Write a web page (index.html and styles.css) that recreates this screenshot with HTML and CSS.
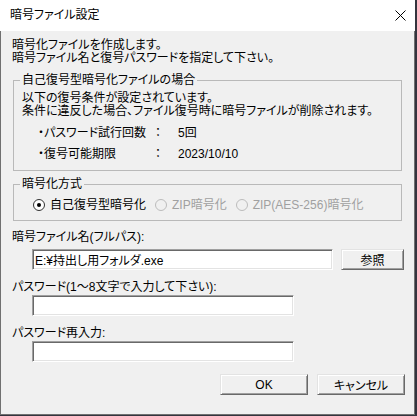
FILE: index.html
```html
<!DOCTYPE html>
<html lang="ja">
<head>
    <meta charset="UTF-8">
    <title>暗号ファイル設定</title>
    <link rel="stylesheet" href="styles.css">
</head>
<body>
    <div class="window">
        <div class="titlebar">
            <span class="title">暗号ファイル設定</span>
            <svg class="close" width="11" height="11" viewBox="0 0 11 11">
                <path d="M0.5 0.5 L10.5 10.5 M10.5 0.5 L0.5 10.5" stroke="#000" stroke-width="1"/>
            </svg>
        </div>
        <div class="client">
            <div class="intro">
                <p>暗号化ファイルを作成します。</p>
                <p>暗号ファイル名と復号パスワードを指定して下さい。</p>
            </div>

            <fieldset class="group cond-group">
                <legend>自己復号型暗号化ファイルの場合</legend>
                <div class="note">
                    <p>以下の復号条件が設定されています。</p>
                    <p>条件に違反した場合、ファイル復号時に暗号ファイルが削除されます。</p>
                </div>
                <div class="conds">
                    <span>・パスワード試行回数</span><span>：</span><span>5回</span>
                    <span>・復号可能期限</span><span>：</span><span>2023/10/10</span>
                </div>
            </fieldset>

            <fieldset class="group method-group">
                <legend>暗号化方式</legend>
                <div class="radios">
                    <label class="radio checked"><span class="dot"></span>自己復号型暗号化</label>
                    <label class="radio disabled"><span class="dot"></span>ZIP暗号化</label>
                    <label class="radio disabled"><span class="dot"></span>ZIP(AES-256)暗号化</label>
                </div>
            </fieldset>

            <div class="label label-file">暗号ファイル名(フルパス):</div>
            <div class="row">
                <input class="text path" type="text" value="E:¥持出し用フォルダ.exe">
                <button class="btn browse">参照</button>
            </div>

            <div class="label label-pw">パスワード(1～8文字で入力して下さい):</div>
            <div class="row">
                <input class="text pw" type="password">
            </div>

            <div class="label label-pw2">パスワード再入力:</div>
            <div class="row">
                <input class="text pw" type="password">
            </div>

            <div class="actions">
                <button class="btn">OK</button>
                <button class="btn">キャンセル</button>
            </div>
        </div>
    </div>
</body>
</html>
```

FILE: styles.css
```css
body {
    margin: 0;
    background: #34343e;
    font-family: "Liberation Sans", "Noto Sans CJK JP", sans-serif;
    font-size: 12px;
    font-feature-settings: "palt";
    color: #000;
}
.window {
    width: 415px;
    height: 415px;
    display: flex;
    flex-direction: column;
    background: #f0f0f0;
}
.titlebar {
    height: 31px;
    flex: none;
    background: #fff;
    display: flex;
    align-items: center;
    justify-content: space-between;
    padding: 0 9px 0 10px;
}
.title {
    line-height: 13px;
}
.client {
    flex: 1;
    border: 1px solid #707070;
    border-top: none;
    padding: 8px 0 0 11px;
}
p {
    margin: 0;
}
.intro, .note {
    line-height: 13px;
}
.group {
    margin: 9px 0 0 1px;
    width: 389px;
    box-sizing: border-box;
    border: 1px solid #b9b9b9;
    padding: 6px 0 10px 8px;
    min-width: 0;
}
.group legend {
    padding: 0 2px;
    margin-left: -2px;
    line-height: 12px;
}
.conds {
    display: grid;
    grid-template-columns: 117px 23px auto;
    row-gap: 9px;
    margin: 9px 0 0 16px;
    line-height: 12px;
}
.method-group {
    margin-top: 7px;
    padding: 8px 0 8px 8px;
}
.radios {
    display: flex;
    padding-left: 11px;
    line-height: 14px;
}
.radio {
    display: flex;
    align-items: center;
    margin-right: 9px;
}
.radio .dot {
    width: 10px;
    height: 10px;
    border: 1px solid #333;
    border-radius: 50%;
    background: #fff;
    margin-right: 5px;
    position: relative;
}
.radio.checked .dot::after {
    content: "";
    position: absolute;
    left: 3px;
    top: 3px;
    width: 4px;
    height: 4px;
    border-radius: 50%;
    background: #000;
}
.radio.disabled {
    color: #a0a0a0;
}
.radio.disabled .dot {
    border-color: #bcbcbc;
    background: #f0f0f0;
}
.label {
    line-height: 12px;
}
.label-file { margin-top: 10px; }
.label-pw { margin-top: 11px; }
.label-pw2 { margin-top: 11px; }
.row {
    display: flex;
    gap: 8px;
    padding-left: 20px;
    margin-top: 6px;
}
.label-pw + .row, .label-pw2 + .row {
    margin-top: 2px;
}
.text {
    height: 21px;
    box-sizing: border-box;
    margin: 0;
    padding: 0 2px;
    font: inherit;
    font-feature-settings: "palt";
    border: 1px solid;
    border-color: #a0a0a0 #fff #fff #a0a0a0;
    box-shadow: inset 1px 1px #696969, inset -1px -1px #e3e3e3;
    background: #fff;
    outline: none;
}
.path { width: 301px; }
.pw { width: 262px; }
.btn {
    height: 21px;
    width: 88px;
    margin: 0;
    padding: 0;
    font: inherit;
    font-feature-settings: "palt";
    background: #f0f0f0;
    border: 1px solid;
    border-color: #e3e3e3 #696969 #696969 #e3e3e3;
    box-shadow: inset 1px 1px #fff, inset -1px -1px #a0a0a0;
    color: #000;
}
.browse { width: 63px; }
.actions {
    display: flex;
    gap: 9px;
    padding-left: 208px;
    margin-top: 12px;
}
```
